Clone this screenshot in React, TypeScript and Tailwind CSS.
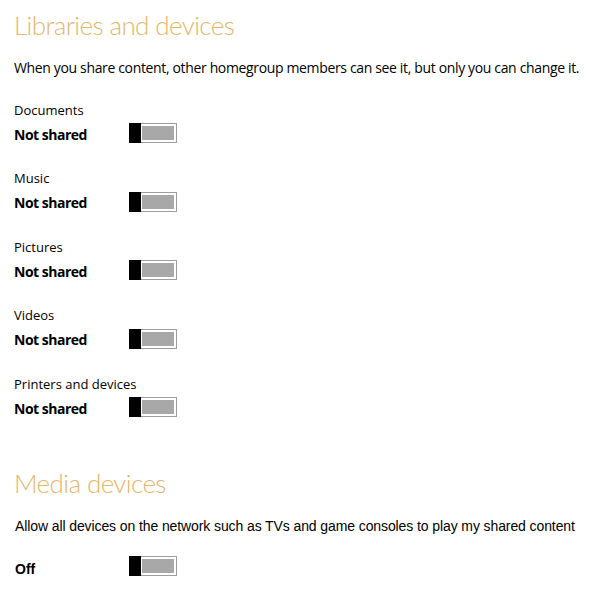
import React from "react";

function Toggle() {
  return (
    <div className="flex h-[20px] w-[48px] shrink-0">
      <div className="w-[12px] h-full bg-black" />
      <div className="flex-1 h-full border border-l-0 border-[#9c9c9c] py-[2px] pr-[2px] pl-[1px] bg-white">
        <div className="h-full w-full bg-[#a8a8a8]" />
      </div>
    </div>
  );
}

const items = ["Documents", "Music", "Pictures", "Videos", "Printers and devices"];

export default function App() {
  return (
    <div className="bg-white w-[591px] h-[600px] overflow-hidden text-black">
      <div className="pl-[14px] pt-[8px] font-['Open_Sans',sans-serif]">
        <h1 className="font-['Lato',sans-serif] text-[26px] leading-[34px] font-light tracking-[-0.6px] text-[#e6b66a]">
          Libraries and devices
        </h1>
        <p className="mt-[16.5px] text-[14px] leading-[18px] tracking-[-0.35px]">
          When you share content, other homegroup members can see it, but only you can change it.
        </p>
        <div className="mt-[25px] flex flex-col gap-[25.5px]">
          {items.map((it) => (
            <div key={it} className="flex flex-col">
              <div className="h-[17px] text-[13px] leading-[17px]">{it}</div>
              <div className="flex items-start mt-[4.5px]">
                <div className="w-[115px] mt-[1.5px] text-[14px] font-bold tracking-[-0.5px] leading-[20px]">
                  Not shared
                </div>
                <Toggle />
              </div>
            </div>
          ))}
        </div>
      </div>
      <div className="pl-[15px] mt-[47px] font-['Liberation_Sans',Arial,sans-serif]">
        <h2 className="font-['Lato',sans-serif] ml-[-1px] text-[26px] leading-[34px] font-light tracking-[-0.6px] text-[#e6b66a]">
          Media devices
        </h2>
        <p className="mt-[17.5px] text-[14px] leading-[18px] tracking-[-0.1px]">
          Allow all devices on the network such as TVs and game consoles to play my shared content
        </p>
        <div className="flex items-start h-[20px] mt-[21px]">
          <div className="w-[114px] mt-[3px] text-[14px] font-bold leading-[20px]">Off</div>
          <Toggle />
        </div>
      </div>
    </div>
  );
}
